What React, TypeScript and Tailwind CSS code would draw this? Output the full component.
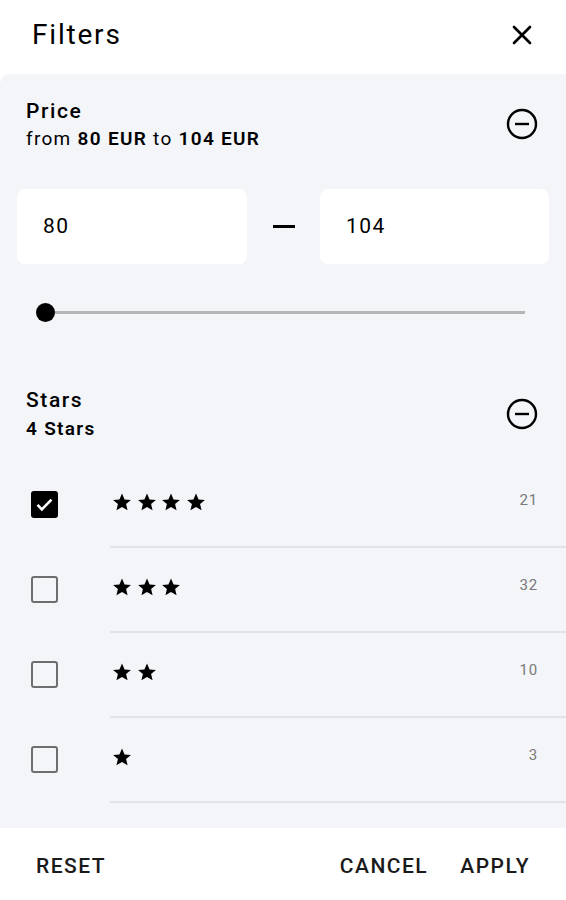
import { X } from 'lucide-react'

const rows = [
  { stars: 4, count: 21, checked: true },
  { stars: 3, count: 32, checked: false },
  { stars: 2, count: 10, checked: false },
  { stars: 1, count: 3, checked: false },
]

function MinusCircle() {
  return (
    <svg width="32" height="32" viewBox="0 0 32 32" fill="none" stroke="black" strokeWidth="2.4">
      <circle cx="16" cy="16" r="14" />
      <line x1="9" y1="16" x2="23" y2="16" />
    </svg>
  )
}

function Star() {
  return (
    <svg width="20" height="20" viewBox="0 0 24 24" fill="black">
      <path d="M12 1.8l3.1 7.1 7.6.6-5.8 5 1.8 7.5L12 18l-6.7 4 1.8-7.5-5.8-5 7.6-.6z" />
    </svg>
  )
}

function Checkbox({ checked }: { checked: boolean }) {
  if (checked) {
    return (
      <div className="w-[27px] h-[27px] rounded-[3px] bg-black flex items-center justify-center">
        <svg width="21" height="21" viewBox="0 0 24 24" fill="none" stroke="white" strokeWidth="3">
          <path d="M4 12.5l5 5L20 6.5" />
        </svg>
      </div>
    )
  }
  return <div className="w-[27px] h-[27px] rounded-[3px] border-[2.5px] border-[#6e6e6e]" />
}

export default function App() {
  return (
    <div className="w-[566px] h-[900px] bg-white flex flex-col font-['Roboto',sans-serif] text-black overflow-hidden">
      <div className="h-[74px] shrink-0 flex items-center justify-between pl-[32px] pr-[28px] pb-[4px]">
        <h1 className="text-[28px] leading-none tracking-[1.8px]">Filters</h1>
        <X size={32} strokeWidth={2} />
      </div>

      <div className="flex-1 bg-[#f3f5f9] rounded-tl-[10px] flex flex-col">
        <div className="flex items-center justify-between pl-[26px] pr-[28px] pt-[22px]">
          <div>
            <div className="text-[21px] font-medium leading-[30px] tracking-[1.6px]">Price</div>
            <div className="text-[19px] leading-[26px] tracking-[1.3px]">
              from <span className="font-semibold">80 EUR</span> to <span className="font-semibold">104 EUR</span>
            </div>
          </div>
          <MinusCircle />
        </div>

        <div className="flex items-center px-[17px] mt-[37px]">
          <div className="w-[230px] h-[75px] bg-white rounded-[8px] flex items-center pl-[26px] text-[21px] tracking-[1.5px]">80</div>
          <div className="flex-1 flex justify-center">
            <div className="w-[22px] h-[2.5px] bg-black" />
          </div>
          <div className="w-[229px] h-[75px] bg-white rounded-[8px] flex items-center pl-[26px] text-[21px] tracking-[1.5px]">104</div>
        </div>

        <div className="relative mx-[36px] mt-[38px] h-[20px] flex items-center">
          <div className="w-full h-[3px] bg-[#b5b5b5] ml-[8px] mr-[5px]" />
          <div className="absolute left-0 w-[19px] h-[19px] rounded-full bg-black" />
        </div>

        <div className="flex items-center justify-between pl-[26px] pr-[28px] mt-[63px]">
          <div>
            <div className="text-[21px] font-medium leading-[30px] tracking-[1.6px]">Stars</div>
            <div className="text-[19px] font-semibold leading-[28px] tracking-[1.3px]">4 Stars</div>
          </div>
          <MinusCircle />
        </div>

        <div className="mt-[20px]">
          {rows.map((r) => (
            <div key={r.stars} className="flex h-[85px]">
              <div className="w-[110px] flex items-center pl-[31px] pb-[2px]">
                <Checkbox checked={r.checked} />
              </div>
              <div className="flex-1 flex items-center justify-between pr-[28px] border-b-2 border-[#e1e3e7] pb-[6px]">
                <div className="flex gap-[4.5px] ml-[2px]">
                  {Array.from({ length: r.stars }).map((_, i) => (
                    <Star key={i} />
                  ))}
                </div>
                <span className="text-[15px] text-[#7a7a7a] tracking-[0.8px] -mt-[2px]">{r.count}</span>
              </div>
            </div>
          ))}
        </div>
      </div>

      <div className="h-[72px] shrink-0 bg-white flex items-center justify-between pl-[36px] pr-[36px] pt-[6px] text-[21px] font-medium tracking-[1.5px] text-[#1a1a1a]">
        <span>RESET</span>
        <div className="flex gap-[32px]">
          <span>CANCEL</span>
          <span>APPLY</span>
        </div>
      </div>
    </div>
  )
}
